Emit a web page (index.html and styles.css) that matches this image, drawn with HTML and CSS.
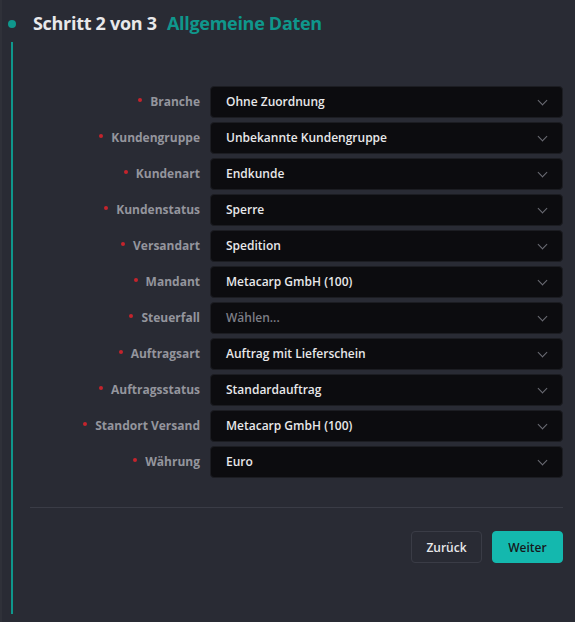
FILE: index.html
```html
<!DOCTYPE html>
<html lang="de">
<head>
  <meta charset="UTF-8"/>
  <meta name="viewport" content="width=device-width, initial-scale=1.0"/>
  <title>Neuer Kunde</title>
  <link rel="stylesheet" href="styles.css">
</head>
<body>
<div class="wizard">
  <div class="step">
    <div class="rail">
      <span class="rail-dot"></span>
      <span class="rail-line"></span>
    </div>

    <div class="step-body">
      <h2 class="step-title">Schritt 2 von 3 <span class="step-name">Allgemeine Daten</span></h2>

      <div class="form">
        <label class="field-label required">Branche</label>
        <div class="select">Ohne Zuordnung</div>

        <label class="field-label required">Kundengruppe</label>
        <div class="select">Unbekannte Kundengruppe</div>

        <label class="field-label required">Kundenart</label>
        <div class="select">Endkunde</div>

        <label class="field-label required">Kundenstatus</label>
        <div class="select">Sperre</div>

        <label class="field-label required">Versandart</label>
        <div class="select">Spedition</div>

        <label class="field-label required">Mandant</label>
        <div class="select">Metacarp GmbH (100)</div>

        <label class="field-label required">Steuerfall</label>
        <div class="select empty">Wählen...</div>

        <label class="field-label required">Auftragsart</label>
        <div class="select">Auftrag mit Lieferschein</div>

        <label class="field-label required">Auftragsstatus</label>
        <div class="select">Standardauftrag</div>

        <label class="field-label required">Standort Versand</label>
        <div class="select">Metacarp GmbH (100)</div>

        <label class="field-label required">Währung</label>
        <div class="select">Euro</div>
      </div>

      <hr class="divider">

      <div class="actions">
        <button class="btn">Zurück</button>
        <button class="btn primary">Weiter</button>
      </div>
    </div>
  </div>
</div>
</body>
</html>
```

FILE: styles.css
```css
:root {
  --bg: #292b34;
  --edge: #2f3139;
  --teal: #0f978c;
  --teal-btn: #14b8ae;
  --fg: #e8e8ea;
  --muted: #94959d;
  --field: #0c0c0f;
  --field-border: #1c1d22;
  --line: #3a3c46;
  --danger: #c4242c;
}

html, body {
  margin: 0;
  height: 100%;
}

body {
  background-color: var(--bg);
  color: var(--fg);
  font-family: 'Open Sans', 'Noto Sans', sans-serif;
  border-left: 2px solid var(--edge);
  box-sizing: border-box;
}

.wizard {
  padding: 10px 12px 0 0;
}

.step {
  display: flex;
}

/* timeline on the left: dot for the current step, line down the section */
.rail {
  width: 30px;
  display: flex;
  flex-direction: column;
  align-items: center;
  flex-shrink: 0;
  margin-left: -5px;
}

.rail-dot {
  width: 8px;
  height: 8px;
  border-radius: 50%;
  background-color: var(--teal);
  margin-top: 10px;
}

.rail-line {
  width: 2px;
  height: 572px;
  margin-top: 14px;
  background-color: var(--teal);
}

.step-body {
  flex: 1;
  padding-left: 6px;
}

.step-title {
  margin: 0;
  font-size: 18px;
  font-weight: 700;
  line-height: 26px;
  letter-spacing: -0.3px;
  color: var(--fg);
}

.step-name {
  color: var(--teal);
  margin-left: 6px;
}

.form {
  display: grid;
  grid-template-columns: 167px 1fr;
  column-gap: 10px;
  row-gap: 4px;
  margin-top: 50px;
}

.field-label {
  display: flex;
  align-items: center;
  justify-content: flex-end;
  font-size: 12px;
  font-weight: 700;
  color: var(--muted);
  padding-bottom: 1px;
}

.required::before {
  content: "";
  width: 4px;
  height: 4px;
  border-radius: 50%;
  background-color: var(--danger);
  margin-right: 8px;
  margin-top: -3px;
}

.select {
  position: relative;
  height: 32px;
  line-height: 30px;
  box-sizing: border-box;
  padding: 0 36px 0 15px;
  background-color: var(--field);
  border: 1px solid var(--field-border);
  border-radius: 4px;
  font-size: 12px;
  font-weight: 600;
  color: var(--fg);
}

.select.empty {
  color: #7d7e86;
}

/* chevron of the dropdown */
.select::after {
  content: "";
  position: absolute;
  right: 16px;
  top: 10px;
  width: 6px;
  height: 6px;
  border-right: 1.2px solid #6c6d75;
  border-bottom: 1.2px solid #6c6d75;
  transform: rotate(45deg);
}

.divider {
  border: none;
  border-top: 1px solid var(--line);
  margin: 29px 0 0 -3px;
}

.actions {
  display: flex;
  justify-content: flex-end;
  gap: 10px;
  margin-top: 23px;
}

.btn {
  width: 71px;
  height: 32px;
  border-radius: 4px;
  font-family: inherit;
  font-size: 12px;
  font-weight: 600;
  cursor: pointer;
  background-color: transparent;
  border: 1px solid var(--line);
  color: var(--fg);
}

.btn.primary {
  background-color: var(--teal-btn);
  border-color: var(--teal-btn);
  color: #16191c;
}
```
